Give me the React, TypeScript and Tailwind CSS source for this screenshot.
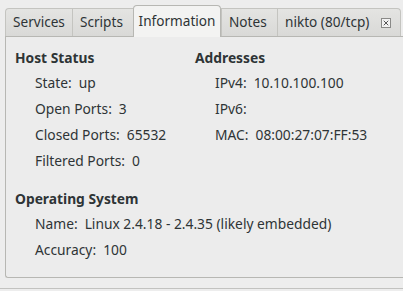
import { X } from 'lucide-react'

const font = { fontFamily: '"Noto Sans", "Open Sans", sans-serif' }

function Tab({
  label,
  width,
  active,
  closable,
}: {
  label: string
  width: string
  active?: boolean
  closable?: boolean
}) {
  if (active) {
    return (
      <div
        className={`relative z-10 -mb-px flex h-[32px] shrink-0 items-center justify-center whitespace-nowrap rounded-t-[4px] border border-b-0 border-[#b7b7b3] bg-[#f3f3f2] text-[13.6px] text-[#2e3436] ${width}`}
      >
        {label}
      </div>
    )
  }
  return (
    <div
      className={`mt-[3px] flex h-[28px] shrink-0 items-center justify-between whitespace-nowrap border border-b-0 border-r-0 border-[#c4c4c0] bg-gradient-to-b from-[#e4e4e2] to-[#d9d9d7] px-[7px] text-[13.6px] text-[#2e3436] first:rounded-tl-[4px] last:rounded-tr-[4px] last:border-r ${width}`}
    >
      {label}
      {closable && (
        <span className="mr-[2px] flex h-[10px] w-[10px] items-center justify-center border border-[#8a8a88] bg-[#f2f2f2]">
          <X size={8} strokeWidth={3} className="text-[#555]" />
        </span>
      )}
    </div>
  )
}

function Field({ label, value }: { label: string; value?: string }) {
  return (
    <div className="flex h-[26px] items-center pl-[20px] text-[13.8px] text-[#2e3436]">
      <span>{label}:</span>
      {value && <span className="ml-[7px]">{value}</span>}
    </div>
  )
}

function Heading({ children, className = '' }: { children: string; className?: string }) {
  return (
    <div className={`flex h-[24px] items-center text-[13.8px] font-bold text-[#2e3436] ${className}`}>
      {children}
    </div>
  )
}

export default function App() {
  return (
    <div className="h-[291px] w-[403px] overflow-hidden bg-[#ededed]" style={font}>
      <div className="flex h-[36px] items-end pl-[5px] pt-[4px]">
        <Tab label="Services" width="w-[67px]" />
        <Tab label="Scripts" width="w-[61px]" />
        <Tab label="Information" width="w-[88px]" active />
        <Tab label="Notes" width="w-[56px]" />
        <Tab label="nikto (80/tcp)" width="w-[124px]" closable />
      </div>
      <div className="ml-[5px] h-[242px] rounded-bl-[3px] border border-r-0 border-[#b7b7b3] bg-[#ececec] pl-[9px] pt-[9px]">
        <div className="flex">
          <div className="w-[180px]">
            <Heading>Host Status</Heading>
            <Field label="State" value="up" />
            <Field label="Open Ports" value="3" />
            <Field label="Closed Ports" value="65532" />
            <Field label="Filtered Ports" value="0" />
          </div>
          <div>
            <Heading>Addresses</Heading>
            <Field label="IPv4" value="10.10.100.100" />
            <Field label="IPv6" />
            <Field label="MAC" value="08:00:27:07:FF:53" />
          </div>
        </div>
        <Heading className="mt-[13px]">Operating System</Heading>
        <Field label="Name" value="Linux 2.4.18 - 2.4.35 (likely embedded)" />
        <Field label="Accuracy" value="100" />
      </div>
      <div className="mt-[10px] border-t border-[#c2c2c0]" />
    </div>
  )
}
